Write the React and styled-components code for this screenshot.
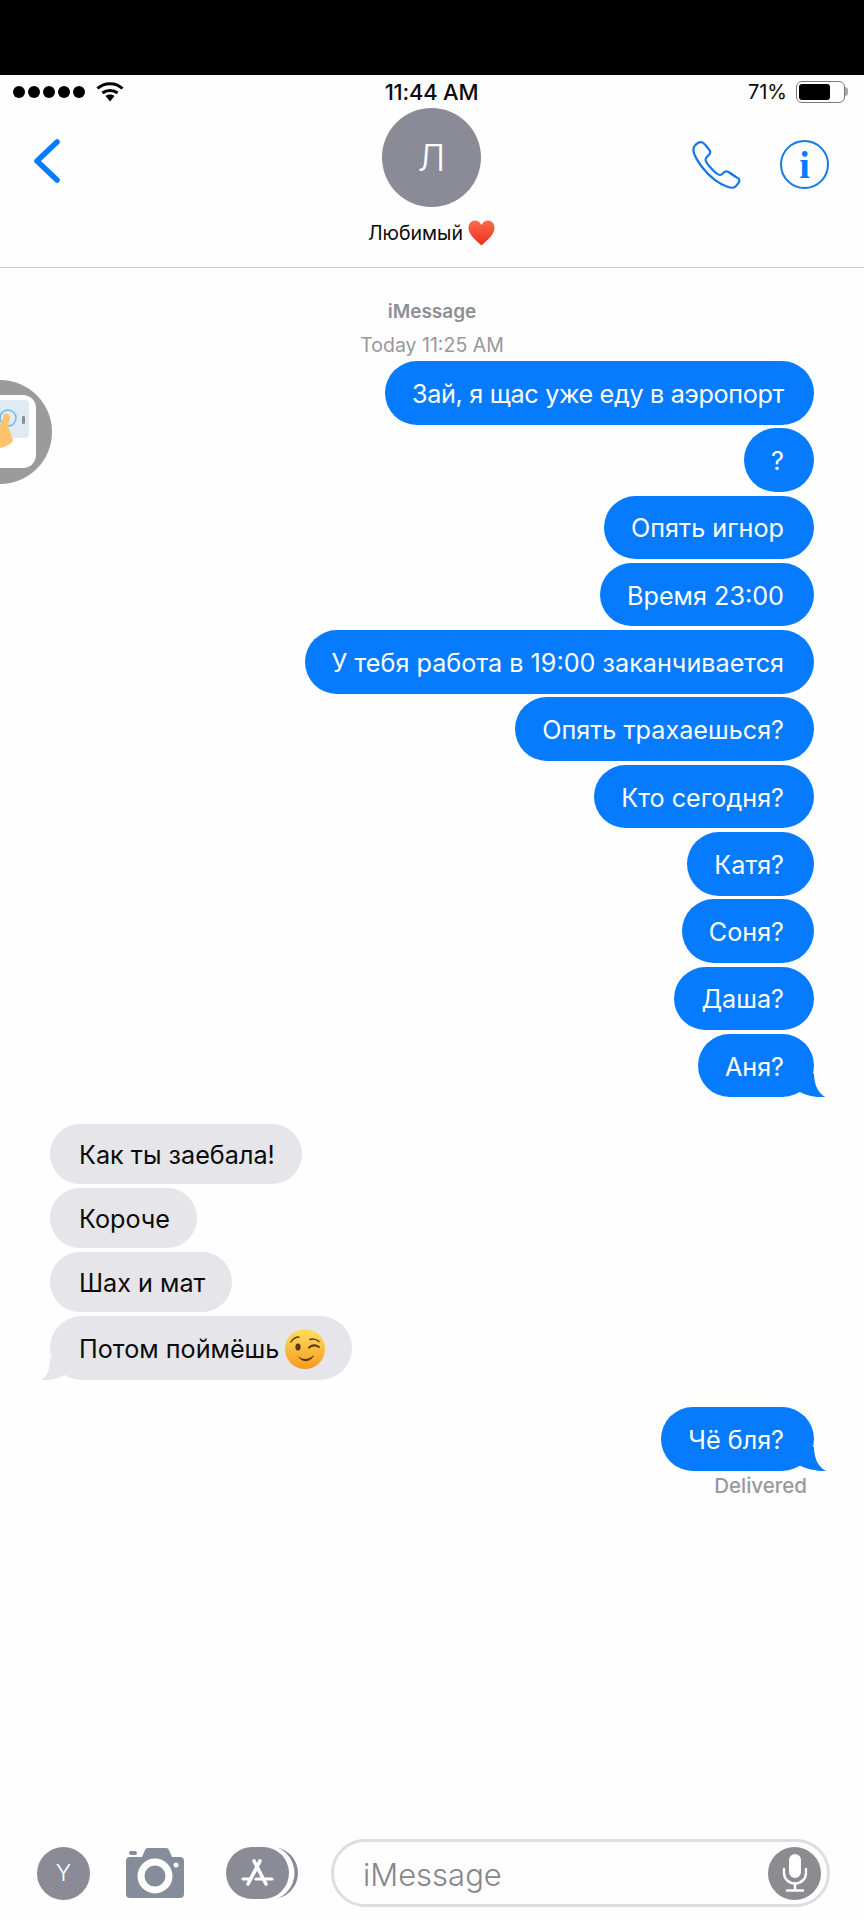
import React from 'react';
import styled, { createGlobalStyle } from 'styled-components';

const GlobalStyle = createGlobalStyle`
  html, body {
    margin: 0;
    padding: 0;
    background: #fefefe;
  }
  * {
    box-sizing: border-box;
  }
`;

const BLUE = '#067bfd';
const GREY = '#8a8b97';

const Screen = styled.div`
  position: relative;
  width: 864px;
  height: 1920px;
  overflow: hidden;
  display: flex;
  flex-direction: column;
  background: #fefefe;
  color: #0b0b0b;
  font-family: Inter, "Liberation Sans", sans-serif;
`;

const TopBlack = styled.div`
  height: 75px;
  flex: none;
  background: #000;
`;

const StatusBar = styled.div`
  height: 33px;
  flex: none;
  padding: 0 19px 0 13px;
  display: grid;
  grid-template-columns: 1fr auto 1fr;
  align-items: center;
`;

const StatusLeft = styled.div`
  display: flex;
  align-items: center;
  gap: 3px;
`;

const Dot = styled.span`
  width: 12px;
  height: 12px;
  border-radius: 50%;
  background: #000;
`;

const Clock = styled.div`
  margin-left: 5px;
  font-size: 22px;
  font-weight: 500;
  letter-spacing: -0.2px;
`;

const StatusRight = styled.div`
  display: flex;
  justify-content: flex-end;
  align-items: center;
  gap: 9px;
  font-size: 20px;
`;

const Battery = styled.div`
  position: relative;
  width: 49px;
  height: 22px;
  padding: 2px;
  border: 1.5px solid #77777c;
  border-radius: 6px;
`;

const BatteryFill = styled.div`
  height: 100%;
  background: #000;
  border-radius: 3px;
`;

const BatteryCap = styled.span`
  position: absolute;
  right: -4px;
  top: 5px;
  width: 3px;
  height: 9px;
  border-radius: 0 3px 3px 0;
  background: #aaa;
`;

const Nav = styled.header`
  height: 160px;
  flex: none;
  display: grid;
  grid-template-columns: 1fr auto 1fr;
  padding: 0 35px 0 34px;
  border-bottom: 1.5px solid #c9c9cd;
`;

const BackSlot = styled.div`
  padding-top: 31px;
`;

const Contact = styled.div`
  display: flex;
  flex-direction: column;
  align-items: center;
`;

const Avatar = styled.div`
  width: 99px;
  height: 99px;
  border-radius: 50%;
  background: ${GREY};
  color: #fff;
  display: flex;
  align-items: center;
  justify-content: center;
  font-size: 37px;
  font-weight: 300;
`;

const ContactName = styled.div`
  margin-top: 13px;
  display: flex;
  align-items: center;
  gap: 5px;
  font-size: 19.5px;
  white-space: nowrap;
`;

const NavActions = styled.div`
  display: flex;
  justify-content: flex-end;
  align-items: flex-start;
  gap: 38px;
  padding-top: 32px;
`;

const InfoButton = styled.div`
  width: 49px;
  height: 49px;
  border: 2px solid #1479e0;
  border-radius: 50%;
  color: ${BLUE};
  display: flex;
  align-items: center;
  justify-content: center;
  font-family: "Liberation Serif", serif;
  font-size: 38px;
  font-weight: 700;
`;

const Thread = styled.main`
  flex: 1;
  display: flex;
  flex-direction: column;
  padding: 33px 50px 0;
`;

const ServiceName = styled.div`
  text-align: center;
  color: #8e8e93;
  font-size: 19px;
  font-weight: 600;
  line-height: 22px;
`;

const Timestamp = styled.div`
  margin-top: 11px;
  text-align: center;
  color: #98989d;
  font-size: 19.5px;
  line-height: 22px;
`;

const SentGroup = styled.div`
  margin-top: ${props => props.$top}px;
  display: flex;
  flex-direction: column;
  align-items: flex-end;
  gap: 3.8px;
`;

const ReceivedGroup = styled.div`
  margin-top: 27px;
  display: flex;
  flex-direction: column;
  align-items: flex-start;
  gap: 4px;
`;

const SentBubble = styled.div`
  position: relative;
  height: 63.5px;
  padding: 2px 30px 0 27px;
  border-radius: 32px;
  background: ${BLUE};
  color: #fff;
  display: flex;
  align-items: center;
  font-size: 25.2px;
  letter-spacing: ${props => (props.$tight ? '-0.33px' : 'normal')};
  white-space: nowrap;

  ${props => props.$tail && `
    &::after {
      content: "";
      position: absolute;
      right: -13px;
      bottom: 0;
      width: 30px;
      height: 24px;
      background: ${BLUE};
      clip-path: path("M0 0H17C17 11 21 20 29 24C22 24.5 8 22 2 18Z");
    }
  `}
`;

const ReceivedBubble = styled.div`
  position: relative;
  height: ${props => (props.$tail ? 64 : 60)}px;
  padding: 2px 27px 0 29px;
  border-radius: 32px;
  background: #e5e5ea;
  color: #0b0b0b;
  display: flex;
  align-items: center;
  gap: 6px;
  font-size: 25.2px;
  white-space: nowrap;

  ${props => props.$tail && `
    &::after {
      content: "";
      position: absolute;
      left: -10px;
      bottom: 0;
      width: 30px;
      height: 22px;
      background: #e5e5ea;
      clip-path: path("M30 0H10C10 10 8 17 1 22C8 22.5 18 20 25 16Z");
    }
  `}
`;

const Delivered = styled.div`
  margin-top: 4px;
  padding-right: 7px;
  align-self: flex-end;
  color: #98989d;
  font-size: 20.5px;
  font-weight: 500;
  line-height: 22px;
`;

const ComposeBar = styled.footer`
  flex: none;
  display: flex;
  align-items: center;
  padding: 0 34px 13px 37px;
`;

const ComposeIcons = styled.div`
  display: flex;
  align-items: center;
  margin-right: 33px;
  gap: 36px;
`;

const LetterButton = styled.div`
  width: 53px;
  height: 53px;
  border-radius: 50%;
  background: ${GREY};
  color: #fff;
  display: flex;
  align-items: center;
  justify-content: center;
  font-size: 23px;
  font-weight: 300;
`;

const AppsSvg = styled.svg`
  margin-left: 6px;
`;

const InputPill = styled.div`
  flex: 1;
  height: 68px;
  padding: 0 6px 0 29px;
  border: 3px solid #dedee0;
  border-radius: 34px;
  display: flex;
  align-items: center;
  justify-content: space-between;
  color: #86868b;
  font-size: 31px;
  font-weight: 300;
`;

const Placeholder = styled.span`
  margin-top: 3px;
`;

const MicButton = styled.div`
  width: 53px;
  height: 53px;
  border-radius: 50%;
  background: #8b8b90;
  display: flex;
  align-items: center;
  justify-content: center;
`;

const FloatingBadge = styled.svg`
  position: absolute;
  left: 0;
  top: 380px;
`;

const sentMessages = [
  'Зай, я щас уже еду в аэропорт',
  '?',
  'Опять игнор',
  'Время 23:00',
  'У тебя работа в 19:00 заканчивается',
  'Опять трахаешься?',
  'Кто сегодня?',
  'Катя?',
  'Соня?',
  'Даша?',
  'Аня?',
];

const Wifi = () => (
  <svg width="28" height="21" viewBox="0 0 28 21" fill="none" style={{ marginLeft: 8 }}>
    <path d="M1.5 7.5C8.5 1 19.5 1 26.5 7.5" stroke="#000" strokeWidth="3" />
    <path d="M6.5 12C10.5 8.6 17.5 8.6 21.5 12" stroke="#000" strokeWidth="3" />
    <path d="M9.5 15L14 20.5L18.5 15C16 13 12 13 9.5 15Z" fill="#000" />
  </svg>
);

const BackChevron = () => (
  <svg width="28" height="44" viewBox="0 0 28 44" fill="none">
    <path d="M23 3L3 22L23 41" stroke={BLUE} strokeWidth="5.5" strokeLinecap="round" strokeLinejoin="round" />
  </svg>
);

const PhoneIcon = () => (
  <svg width="50" height="50" viewBox="0 0 50 50" fill="none">
    <path
      d="M3 5.5C5 3 8 1.5 10.5 2.5C12 3 17 9 18 11C18.7 12.5 18 13.5 17 14.7C15.5 16.3 13.5 17.5 13.5 19.5C13.5 21 15 23.5 18 27C22 31.5 26 35 28 35C30 35 31 32.5 33.5 31.5C35 31 36 31.5 38 33C40 34.5 45 37.5 47 39C48 40.5 46 44 43.5 46.5C42 48 39 48 36 47C28 44.5 17.5 37 10 27C5.5 21 2 15 1.5 11C1.2 8.5 2 6.5 3 5.5Z"
      stroke="#1479e0"
      strokeWidth="2.2"
      strokeLinejoin="round"
    />
  </svg>
);

const HeartEmoji = () => (
  <svg width="27" height="26" viewBox="0 0 27 26">
    <defs>
      <linearGradient id="heartFill" x1="0" y1="0" x2="0" y2="1">
        <stop offset="0" stopColor="#ff6a4d" />
        <stop offset="1" stopColor="#e8301c" />
      </linearGradient>
    </defs>
    <path
      d="M13.5 25.5C9 21 1 15.5 0.5 8.5C0.2 3.5 3.5 0.5 7 0.5C10 0.5 12.3 2.3 13.5 5C14.7 2.3 17 0.5 20 0.5C23.5 0.5 26.8 3.5 26.5 8.5C26 15.5 18 21 13.5 25.5Z"
      fill="url(#heartFill)"
    />
  </svg>
);

const WinkEmoji = () => (
  <svg width="40" height="40" viewBox="0 0 40 40" fill="none">
    <defs>
      <linearGradient id="winkFill" x1="0" y1="0" x2="0" y2="1">
        <stop offset="0" stopColor="#ffdf5e" />
        <stop offset="1" stopColor="#f59a1e" />
      </linearGradient>
    </defs>
    <circle cx="20" cy="20" r="20" fill="url(#winkFill)" />
    <ellipse cx="13" cy="18" rx="2.6" ry="3.6" fill="#5a3a14" />
    <path d="M6 13C8 9.5 11 8 14 8" stroke="#5a3a14" strokeWidth="1.5" strokeLinecap="round" />
    <path d="M24 18.5C27 16 31 16 34 18" stroke="#5a3a14" strokeWidth="2" strokeLinecap="round" />
    <path d="M25 10.5C28 9.5 32 10.5 34 12.5" stroke="#5a3a14" strokeWidth="1.5" strokeLinecap="round" />
    <path d="M13 27C17 31 24 31 29 26C26 34 16 34 13 27Z" fill="#5a3a14" />
  </svg>
);

const CameraIcon = () => (
  <svg width="58" height="50" viewBox="0 0 58 50">
    <rect x="3" y="3" width="8" height="4" rx="2" fill="#858c9a" />
    <path
      d="M16 9L19 2C19.5 0.8 20.5 0 22 0H40C41.5 0 42.5 0.8 43 2L46 9H54C56.5 9 58 10.5 58 13V46C58 48.5 56.5 50 54 50H4C1.5 50 0 48.5 0 46V13C0 10.5 1.5 9 4 9Z"
      fill="#858c9a"
    />
    <circle cx="29" cy="28" r="14" fill="none" stroke="#fff" strokeWidth="7" />
    <circle cx="50" cy="17" r="2.5" fill="#fff" />
  </svg>
);

const AppsIcon = () => (
  <AppsSvg width="72" height="52" viewBox="0 0 72 52" fill="none">
    <circle cx="46" cy="26" r="26" fill="#8a8b97" />
    <circle cx="41" cy="26" r="27.5" fill="#fff" />
    <rect x="0" y="0" width="63" height="52" rx="26" fill="#8a8b97" />
    <path d="M28 14L40 37" stroke="#fff" strokeWidth="3.6" strokeLinecap="round" />
    <path d="M34 14L22 37" stroke="#fff" strokeWidth="3.6" strokeLinecap="round" />
    <path d="M17 32H25M30 32H46" stroke="#fff" strokeWidth="3.2" strokeLinecap="round" />
  </AppsSvg>
);

const MicIcon = () => (
  <svg width="26" height="38" viewBox="0 0 26 38" fill="none">
    <rect x="7" y="0" width="12" height="24" rx="6" fill="#fff" />
    <path d="M2 15V19C2 25 7 29.5 13 29.5C19 29.5 24 25 24 19V15" stroke="#fff" strokeWidth="2.4" strokeLinecap="round" />
    <path d="M13 29.5V36M5 36.5H21" stroke="#fff" strokeWidth="2.4" strokeLinecap="round" />
  </svg>
);

const TouchBadge = () => (
  <FloatingBadge width="53" height="104" viewBox="0 0 53 104">
    <circle cx="0" cy="52" r="52" fill="#9b9a9d" />
    <rect x="-40" y="15" width="76" height="73" rx="13" fill="#fff" />
    <rect x="-30" y="20" width="59" height="38" rx="4" fill="#dfeaf3" />
    <circle cx="8" cy="38" r="8" fill="none" stroke="#6db8ea" strokeWidth="1.5" />
    <rect x="22" y="36" width="3" height="8" rx="1" fill="#8d9094" />
    <path d="M4 34C7 33 10 35 10 38L8 46L13 60C13 63 8 65 4 67L-4 69V50L1 44Z" fill="#fdc26c" />
  </FloatingBadge>
);

function App() {
  return (
    <Screen>
      <GlobalStyle />
      <TopBlack />
      <StatusBar>
        <StatusLeft>
          <Dot /><Dot /><Dot /><Dot /><Dot />
          <Wifi />
        </StatusLeft>
        <Clock>11:44 AM</Clock>
        <StatusRight>
          71%
          <Battery>
            <BatteryFill style={{ width: '71%' }} />
            <BatteryCap />
          </Battery>
        </StatusRight>
      </StatusBar>
      <Nav>
        <BackSlot><BackChevron /></BackSlot>
        <Contact>
          <Avatar>Л</Avatar>
          <ContactName>Любимый <HeartEmoji /></ContactName>
        </Contact>
        <NavActions>
          <PhoneIcon />
          <InfoButton>i</InfoButton>
        </NavActions>
      </Nav>
      <Thread>
        <ServiceName>iMessage</ServiceName>
        <Timestamp>Today 11:25 AM</Timestamp>
        <SentGroup $top={5}>
          {sentMessages.map((text, i) => (
            <SentBubble key={text} $tight={i === 0} $tail={i === sentMessages.length - 1}>{text}</SentBubble>
          ))}
        </SentGroup>
        <ReceivedGroup>
          <ReceivedBubble>Как ты заебала!</ReceivedBubble>
          <ReceivedBubble>Короче</ReceivedBubble>
          <ReceivedBubble>Шах и мат</ReceivedBubble>
          <ReceivedBubble $tail>Потом поймёшь <WinkEmoji /></ReceivedBubble>
        </ReceivedGroup>
        <SentGroup $top={27}>
          <SentBubble $tail>Чё бля?</SentBubble>
        </SentGroup>
        <Delivered>Delivered</Delivered>
      </Thread>
      <ComposeBar>
        <ComposeIcons>
          <LetterButton>Y</LetterButton>
          <CameraIcon />
          <AppsIcon />
        </ComposeIcons>
        <InputPill>
          <Placeholder>iMessage</Placeholder>
          <MicButton><MicIcon /></MicButton>
        </InputPill>
      </ComposeBar>
      <TouchBadge />
    </Screen>
  );
}

export default App;
